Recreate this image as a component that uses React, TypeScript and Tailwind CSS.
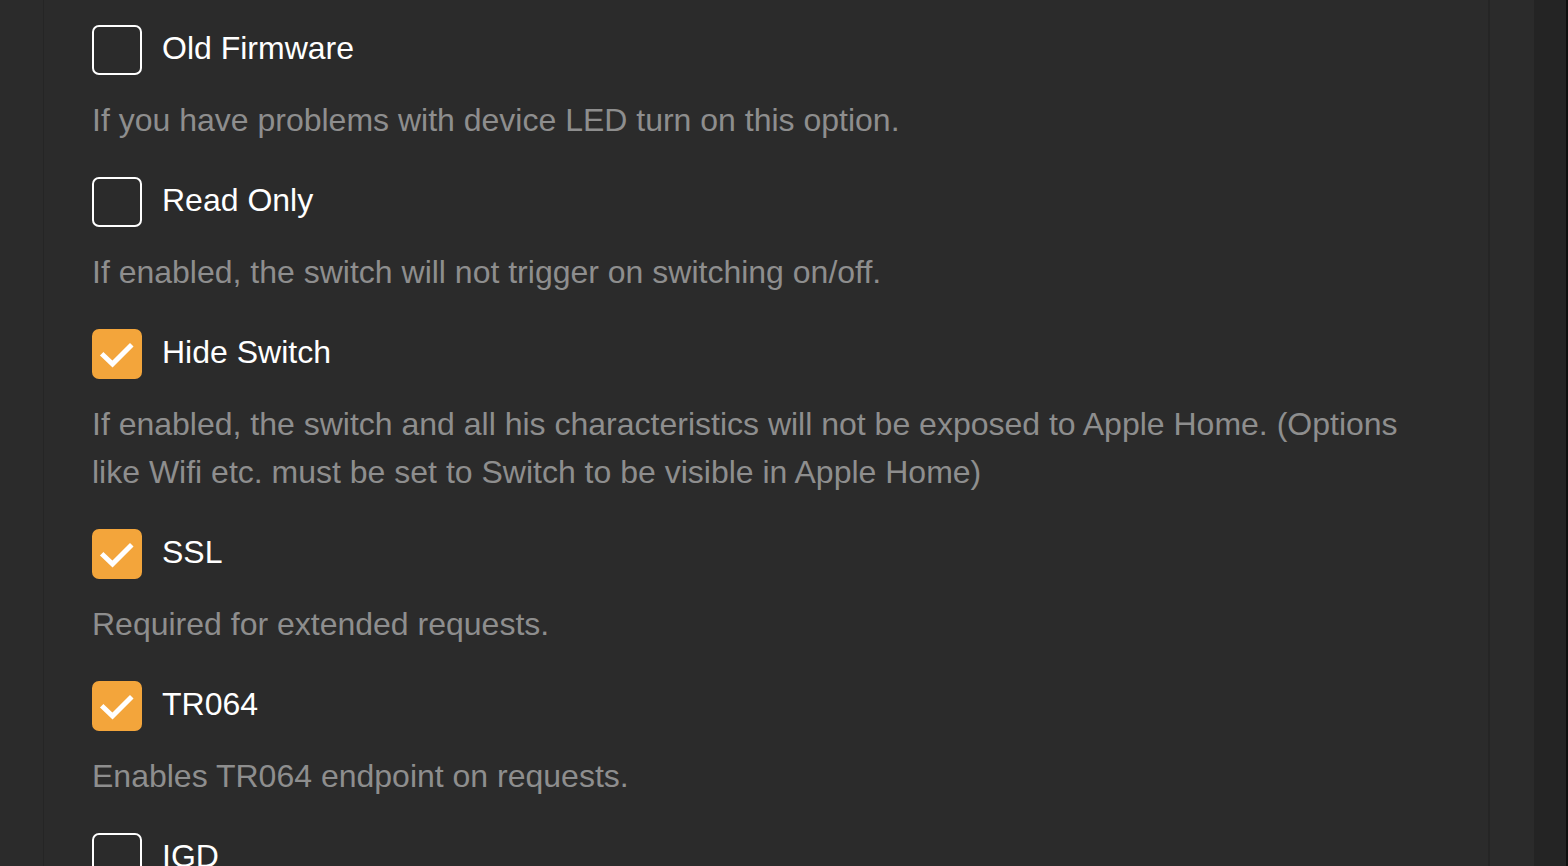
const options = [
  { label: 'Old Firmware', checked: false, desc: 'If you have problems with device LED turn on this option.' },
  { label: 'Read Only', checked: false, desc: 'If enabled, the switch will not trigger on switching on/off.' },
  {
    label: 'Hide Switch',
    checked: true,
    desc: 'If enabled, the switch and all his characteristics will not be exposed to Apple Home. (Options like Wifi etc. must be set to Switch to be visible in Apple Home)',
  },
  { label: 'SSL', checked: true, desc: 'Required for extended requests.' },
  { label: 'TR064', checked: true, desc: 'Enables TR064 endpoint on requests.' },
  { label: 'IGD', checked: false, desc: 'Enables IGD endpoint on requests.' },
]

function Checkbox({ checked }: { checked: boolean }) {
  if (checked) {
    return (
      <div className="w-[50px] h-[50px] rounded-[7px] bg-[#f3a53b] flex items-center justify-center shrink-0">
        <svg width="50" height="50" viewBox="0 0 50 50">
          <path d="M11.5 26.5 L20.5 35 L38 17.5" fill="none" stroke="#fff" strokeWidth="5" strokeLinecap="square" />
        </svg>
      </div>
    )
  }
  return <div className="w-[50px] h-[50px] rounded-[7px] border-2 border-white shrink-0" />
}

export default function App() {
  return (
    <div
      className="flex h-screen overflow-hidden bg-[#2b2b2b]"
      style={{ fontFamily: '"Liberation Sans", Arial, sans-serif' }}
    >
      <div className="flex-1 flex pl-[43px] pr-[44px]">
        <div className="flex-1 border-l border-r-2 border-[#252525] pl-[48px] pr-[48px] pt-[25px]">
          {options.map((o) => (
            <div key={o.label} className="mb-[33px]">
              <label className="flex items-center gap-[20px] h-[50px]">
                <Checkbox checked={o.checked} />
                <span className="text-[32px] text-white leading-none pb-[4px]">{o.label}</span>
              </label>
              <p className="mt-[21px] text-[32px] leading-[48px] text-[#8e8e8e]">{o.desc}</p>
            </div>
          ))}
        </div>
      </div>
      <div className="w-[32px] bg-[#242424]" />
      <div className="w-[2px] bg-[#0f0f0f]" />
    </div>
  )
}
